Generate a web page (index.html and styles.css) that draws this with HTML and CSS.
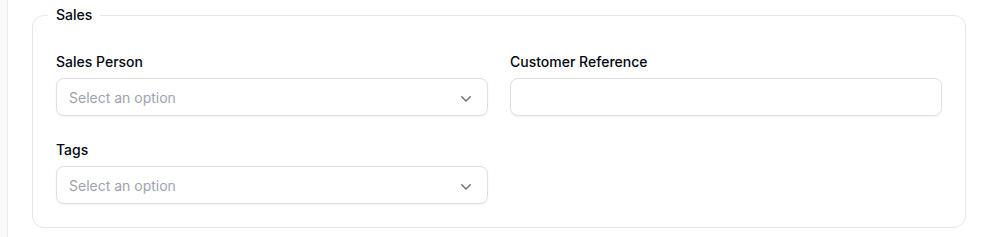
FILE: index.html
```html
<!DOCTYPE html>
<html lang="en">
<head>
<meta charset="utf-8">
<title>Sales</title>
<link rel="stylesheet" href="styles.css">
</head>
<body>
<div class="page">
  <div class="sidebar"></div>
  <main class="main">
    <fieldset class="section">
      <legend class="legend">Sales</legend>
      <div class="grid">
        <div class="field">
          <label class="label">Sales Person</label>
          <div class="select">
            <span class="placeholder">Select an option</span>
            <svg class="chevron" viewBox="0 0 20 20" fill="currentColor" aria-hidden="true"><path fill-rule="evenodd" d="M5.22 8.22a.75.75 0 0 1 1.06 0L10 11.94l3.72-3.72a.75.75 0 1 1 1.06 1.06l-4.25 4.25a.75.75 0 0 1-1.06 0L5.22 9.28a.75.75 0 0 1 0-1.06Z" clip-rule="evenodd"/></svg>
          </div>
        </div>
        <div class="field">
          <label class="label">Customer Reference</label>
          <div class="input"></div>
        </div>
        <div class="field">
          <label class="label">Tags</label>
          <div class="select">
            <span class="placeholder">Select an option</span>
            <svg class="chevron" viewBox="0 0 20 20" fill="currentColor" aria-hidden="true"><path fill-rule="evenodd" d="M5.22 8.22a.75.75 0 0 1 1.06 0L10 11.94l3.72-3.72a.75.75 0 1 1 1.06 1.06l-4.25 4.25a.75.75 0 0 1-1.06 0L5.22 9.28a.75.75 0 0 1 0-1.06Z" clip-rule="evenodd"/></svg>
          </div>
        </div>
      </div>
    </fieldset>
  </main>
</div>
</body>
</html>
```
FILE: styles.css
```css
* { box-sizing: border-box; }
html, body {
  margin: 0;
  padding: 0;
  background: #ffffff;
  font-family: Inter, "Liberation Sans", sans-serif;
  color: #030712;
}
.page {
  display: flex;
  height: 237px;
  overflow: hidden;
}
.sidebar {
  width: 8px;
  flex: none;
  background: #fafafa;
  border-right: 1px solid #ececee;
}
.main {
  flex: 1;
  padding: 3px 22px 0 24px;
}
.section {
  margin: 0;
  border: 1px solid #e5e7eb;
  border-radius: 12px;
  padding: 25px 23px 23px 23px;
  min-width: 0;
}
.legend {
  margin-left: -8px;
  padding: 0 8px;
  font-size: 14px;
  line-height: 24px;
  font-weight: 500;
  color: #030712;
}
.grid {
  display: grid;
  grid-template-columns: 1fr 1fr;
  column-gap: 22px;
  row-gap: 24px;
}
.field {
  display: flex;
  flex-direction: column;
  gap: 6px;
}
.label {
  font-size: 14px;
  line-height: 20px;
  font-weight: 500;
  color: #030712;
}
.select, .input {
  height: 38px;
  border: 1px solid #e0e0e3;
  border-radius: 8px;
  box-shadow: 0 1px 2px rgba(0, 0, 0, 0.06);
  background: #fff;
  display: flex;
  align-items: center;
  padding: 1px 12px 0;
}
.placeholder {
  flex: 1;
  font-size: 14px;
  line-height: 24px;
  color: #9ca3af;
}
.chevron {
  width: 20px;
  height: 20px;
  color: #6b7280;
  flex: none;
  margin-right: -1px;
}
```
